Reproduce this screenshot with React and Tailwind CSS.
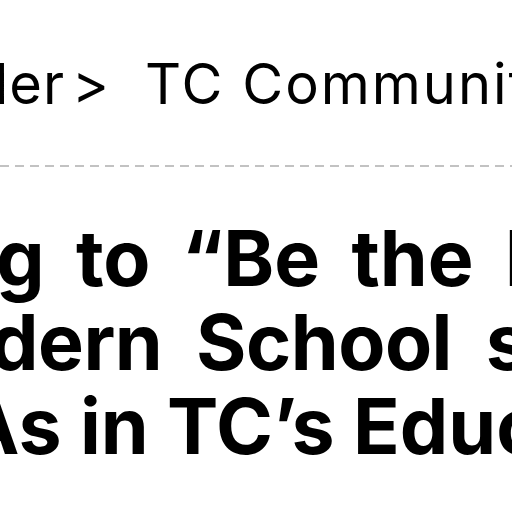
export default function App() {
  return (
    <div className="w-[512px] h-[512px] overflow-hidden bg-white text-black font-['Inter',sans-serif]">
      <div className="pt-[52px] h-[120px] flex items-baseline whitespace-nowrap text-[56px] leading-[64px] font-normal ml-[-26px]">
        <span className="tracking-[1px]">der</span>
        <span className="ml-[7px]">&gt;</span>
        <span className="ml-[36px] tracking-[2px]">TC Community</span>
      </div>
      <div className="mt-[45px] h-[2px] w-[512px] bg-[repeating-linear-gradient(90deg,#c2c2c2_0_9px,transparent_9px_15px)]"></div>
      <h1 className="mt-[49px] text-[77px] leading-[84px] font-bold whitespace-nowrap">
        <div className="ml-[-4px] [word-spacing:13px]">g to “Be the Best</div>
        <div className="ml-[-10px] tracking-[-0.5px] [word-spacing:16px]">dern School s</div>
        <div className="ml-[-38px]">As in TC’s Educators</div>
      </h1>
    </div>
  );
}
